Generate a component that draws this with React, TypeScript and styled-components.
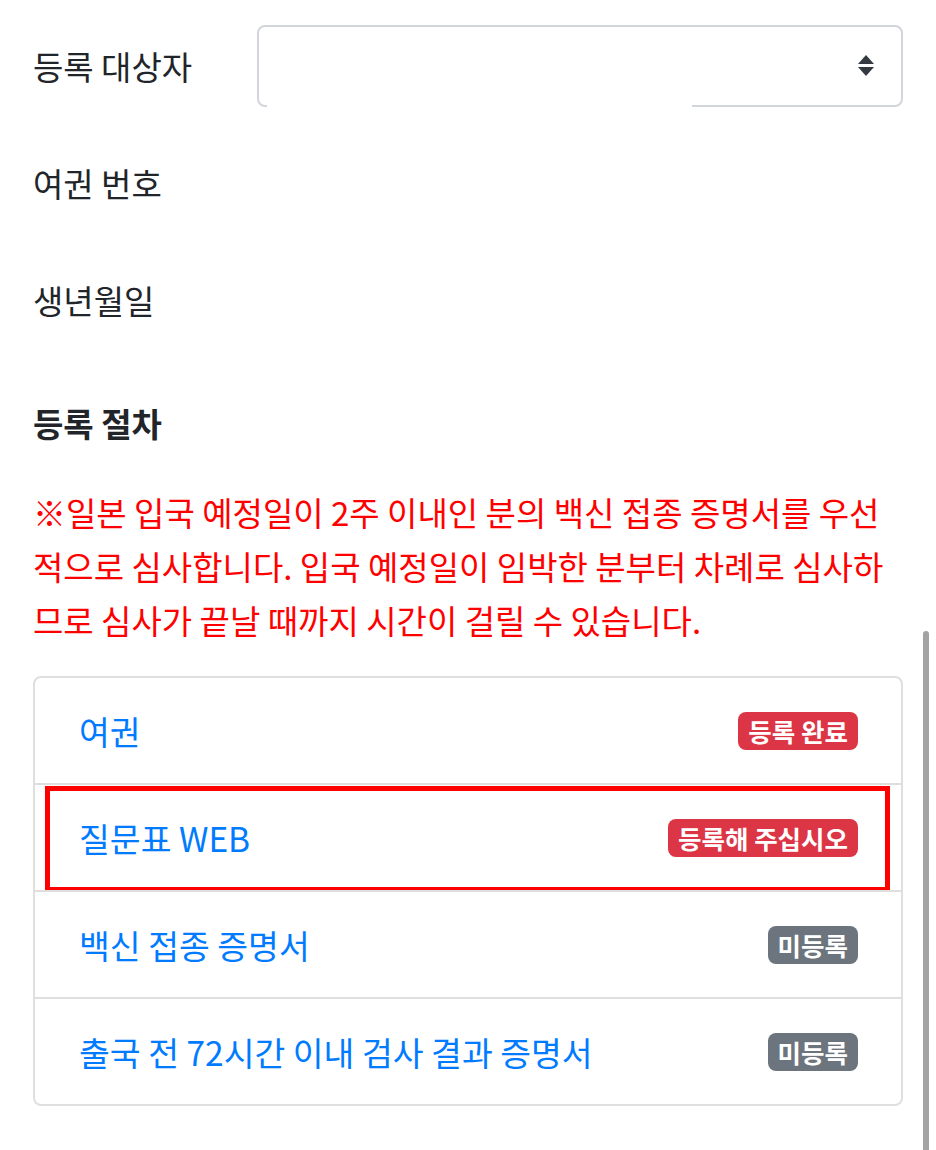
import styled, { createGlobalStyle } from 'styled-components';

const GlobalStyle = createGlobalStyle`
  html, body {
    margin: 0;
    padding: 0;
    background: #ffffff;
  }
  body {
    font-family: 'Noto Sans CJK KR', 'Noto Sans', sans-serif;
    color: #212529;
  }
`;

type Step = {
  title: string;
  status: string;
  tone: 'danger' | 'secondary';
  highlighted?: boolean;
};

const steps: Step[] = [
  { title: '여권', status: '등록 완료', tone: 'danger' },
  { title: '질문표 WEB', status: '등록해 주십시오', tone: 'danger', highlighted: true },
  { title: '백신 접종 증명서', status: '미등록', tone: 'secondary' },
  { title: '출국 전 72시간 이내 검사 결과 증명서', status: '미등록', tone: 'secondary' },
];

export default function App() {
  return (
    <Page>
      <GlobalStyle />
      <Container>
        <FormRow>
          <Label>등록 대상자</Label>
          <SelectBox>
            <SelectArrows viewBox="0 0 18 24" aria-hidden>
              <path d="M9 1 L17 10 L1 10 Z" fill="#343a40" />
              <path d="M1 13 L17 13 L9 22 Z" fill="#343a40" />
            </SelectArrows>
          </SelectBox>
        </FormRow>
        <FormRow>
          <Label>여권 번호</Label>
          <Value />
        </FormRow>
        <FormRow>
          <Label>생년월일</Label>
          <Value />
        </FormRow>

        <SectionTitle>등록 절차</SectionTitle>
        <Notice>
          ※일본 입국 예정일이 2주 이내인 분의 백신 접종 증명서를 우선적으로 심사합니다. 입국
          예정일이 임박한 분부터 차례로 심사하므로 심사가 끝날 때까지 시간이 걸릴 수 있습니다.
        </Notice>

        <ListGroup>
          {steps.map((step) => (
            <ListItem key={step.title}>
              <ItemLink>{step.title}</ItemLink>
              <Badge $tone={step.tone}>{step.status}</Badge>
              {step.highlighted && <Highlight />}
            </ListItem>
          ))}
        </ListGroup>
      </Container>
      <ScrollIndicator />
    </Page>
  );
}

const Page = styled.div`
  position: relative;
  width: 936px;
  height: 1150px;
  overflow: hidden;
`;

const Container = styled.div`
  padding: 25px 33px 0 33px;
`;

const FormRow = styled.div`
  display: grid;
  grid-template-columns: 224px 1fr;
  align-items: center;
  min-height: 82px;
  margin-bottom: 35px;
`;

const Label = styled.div`
  font-size: 33px;
  line-height: 54px;
  color: #212529;
`;

const Value = styled.div`
  min-height: 54px;
`;

const SelectBox = styled.div`
  position: relative;
  height: 82px;
  box-sizing: border-box;
  border: 2px solid #d2d6db;
  border-radius: 8px;
  display: flex;
  align-items: center;
  justify-content: flex-end;
  padding-right: 26px;
  &::after {
    content: '';
    position: absolute;
    left: 8px;
    bottom: -2px;
    width: 425px;
    height: 2px;
    background: #ffffff;
  }
`;

const SelectArrows = styled.svg`
  width: 18px;
  height: 24px;
`;

const SectionTitle = styled.h5`
  margin: 55px 0 35px 0;
  font-size: 33px;
  line-height: 54px;
  font-weight: 700;
  color: #212529;
`;

const Notice = styled.p`
  margin: 0 0 29px 0;
  font-size: 33px;
  line-height: 54px;
  color: #ff0000;
`;

const ListGroup = styled.div`
  border: 2px solid #dfdfdf;
  border-radius: 8px;
`;

const ListItem = styled.div`
  position: relative;
  display: flex;
  align-items: center;
  justify-content: space-between;
  height: 105px;
  padding: 0 43px 0 44px;
  & + & {
    border-top: 2px solid #dfdfdf;
  }
`;

const ItemLink = styled.span`
  font-size: 33.5px;
  color: #007bff;
`;

const Badge = styled.span<{ $tone: 'danger' | 'secondary' }>`
  display: inline-flex;
  align-items: center;
  height: 38px;
  padding: 0 10px;
  border-radius: 8px;
  font-size: 25.5px;
  font-weight: 700;
  color: #ffffff;
  background: ${({ $tone }) => ($tone === 'danger' ? '#dc3545' : '#6c757d')};
`;

const Highlight = styled.div`
  position: absolute;
  top: 1px;
  bottom: -2px;
  left: 10px;
  right: 11px;
  border: 5px solid #ff0000;
  pointer-events: none;
`;

const ScrollIndicator = styled.div`
  position: absolute;
  right: 7px;
  top: 631px;
  width: 6px;
  height: 540px;
  border-radius: 3px;
  background: #a3a3a3;
`;
